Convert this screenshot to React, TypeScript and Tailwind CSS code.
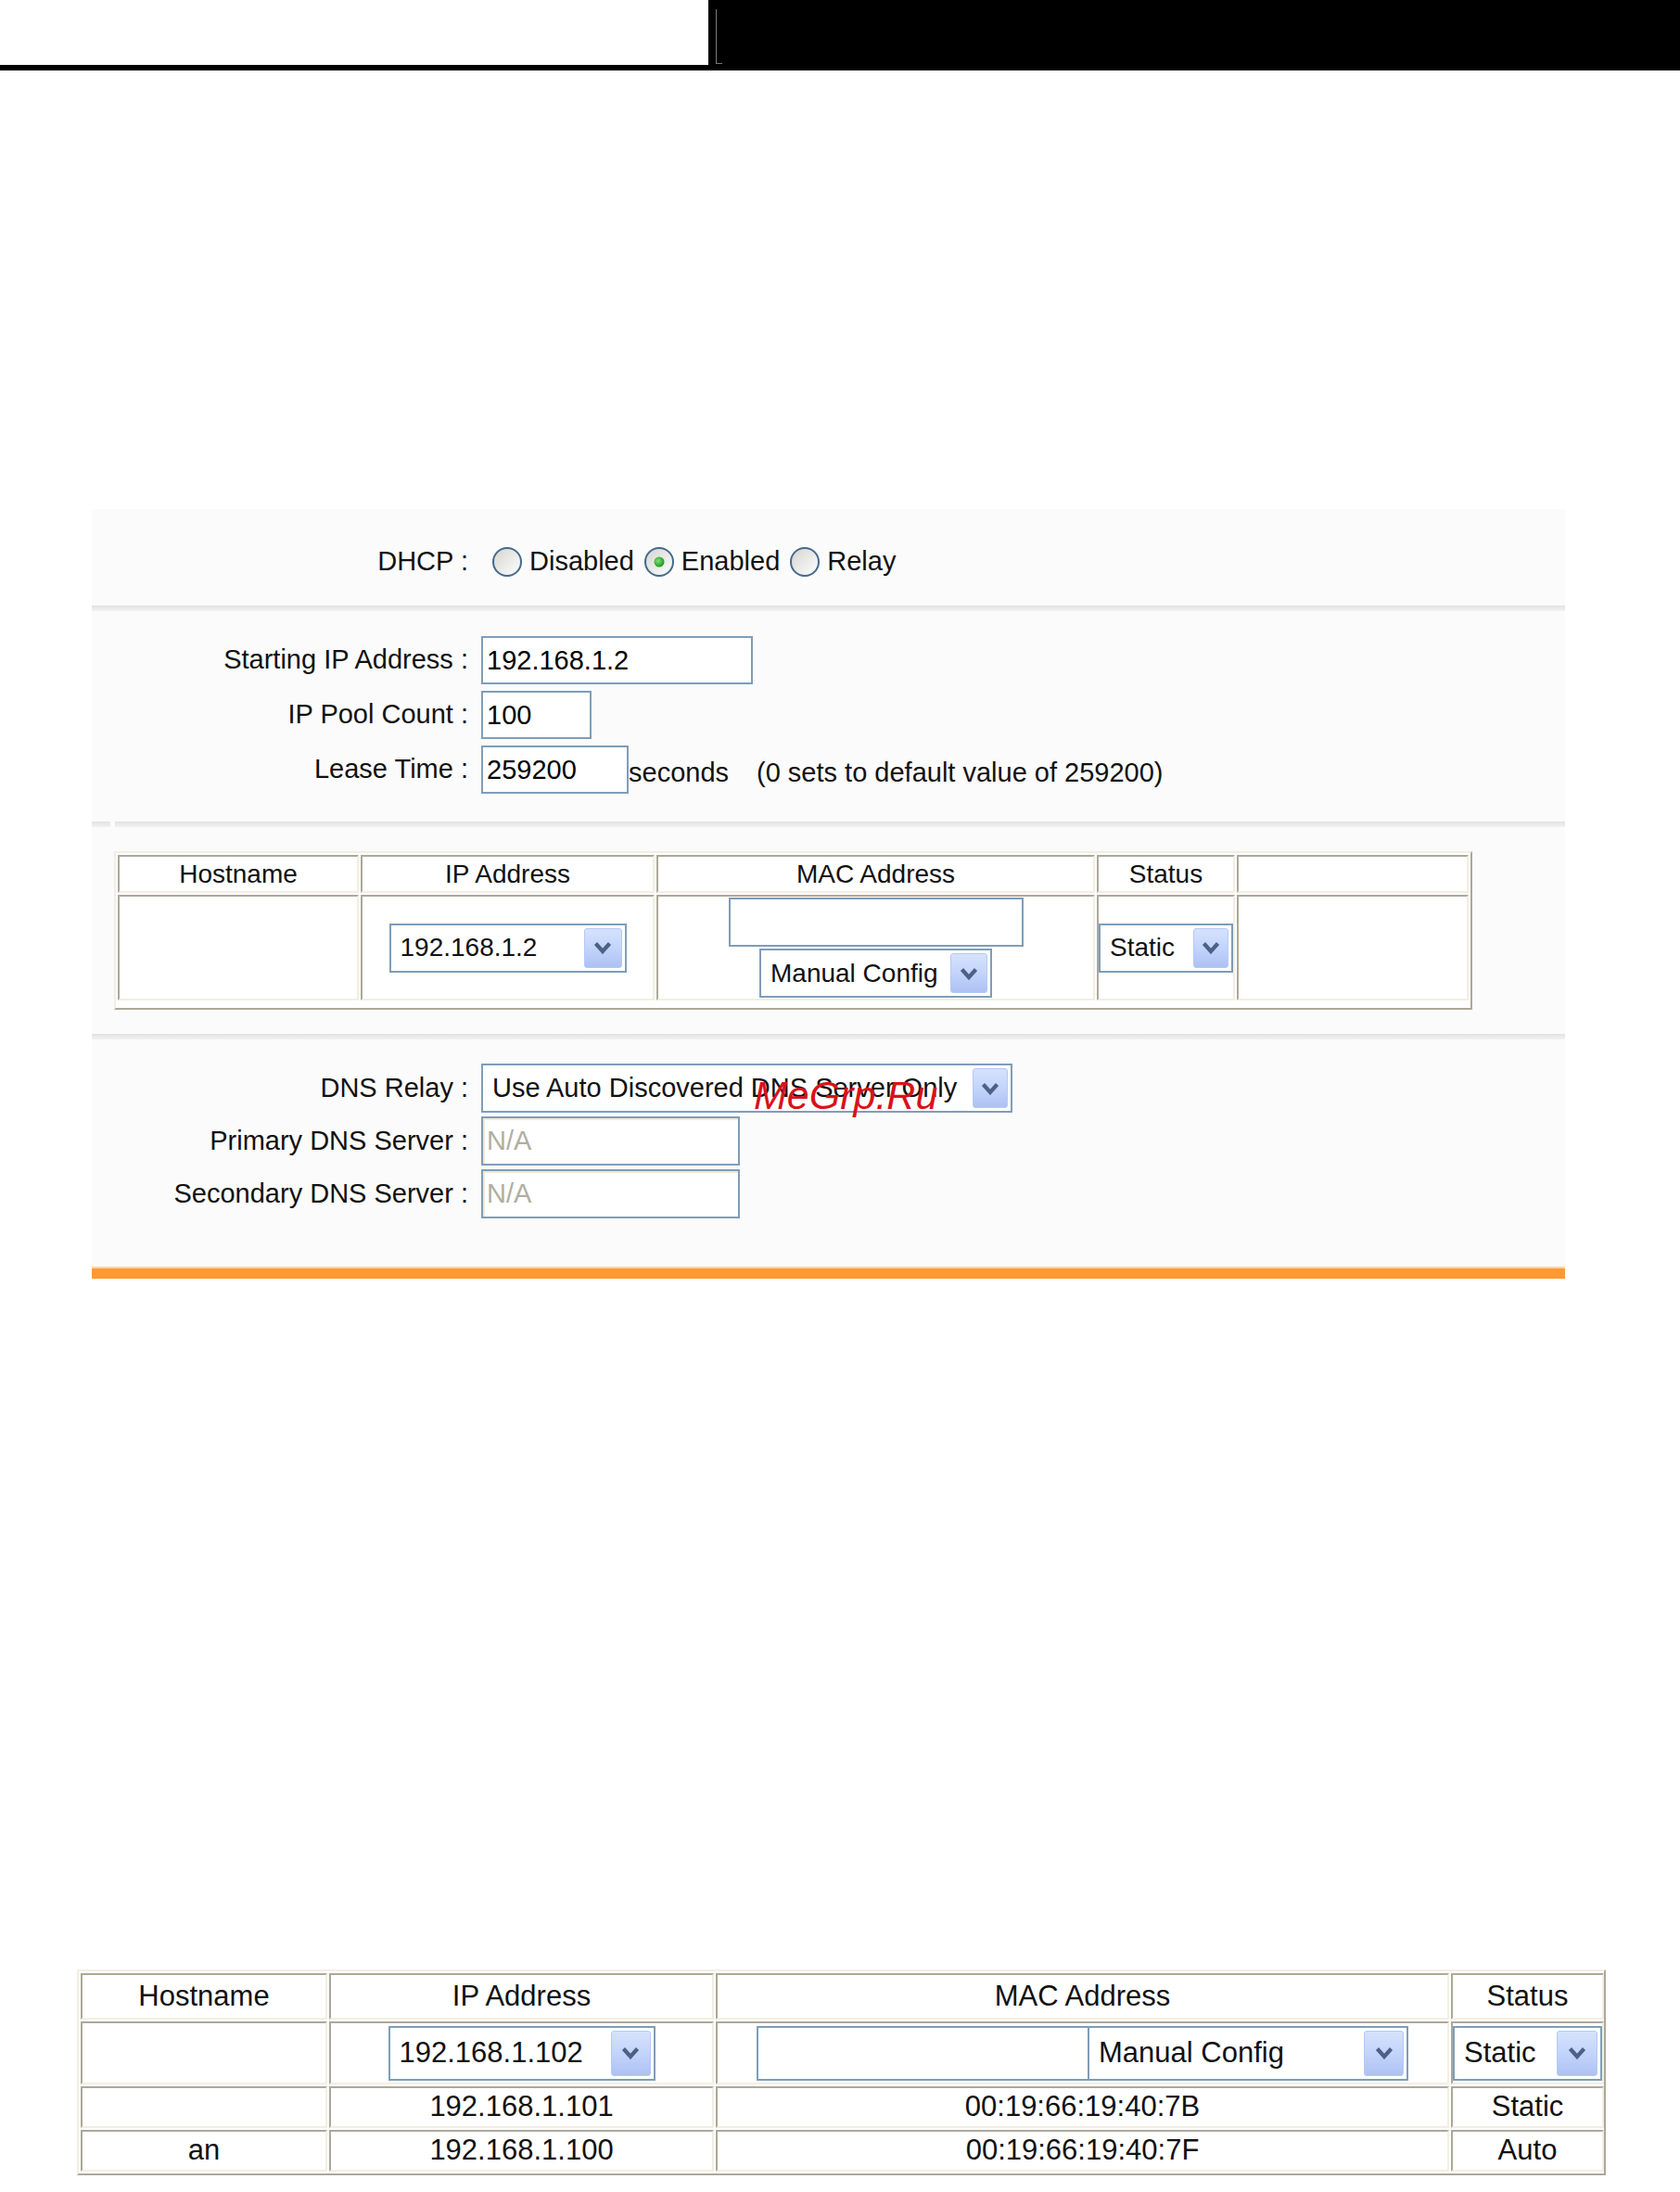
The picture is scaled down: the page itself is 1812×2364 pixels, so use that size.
import React from 'react';

// shared border colours of the XP-style controls
const cellBorder =
  'border-2 border-t-[#aca899] border-l-[#aca899] border-b-[#f1efe2] border-r-[#f1efe2] bg-white';
const tableBorder =
  'border-2 border-t-[#f1efe2] border-l-[#f1efe2] border-b-[#aca899] border-r-[#aca899] bg-white';

const DropButton: React.FC<{ className?: string }> = ({ className = '' }) => (
  <span
    className={`flex shrink-0 items-center justify-center rounded-[3px] border border-[#b5c9f6] bg-linear-to-b from-[#d6e2fd] via-[#c3d4fb] to-[#adc1f3] ${className}`}
  >
    <svg viewBox="0 0 20 14" className="h-[14px] w-[20px]">
      <path d="M2.5 2.5 L10 11 L17.5 2.5" fill="none" stroke="#4d6185" strokeWidth="4.2" />
    </svg>
  </span>
);

interface SelectBoxProps {
  value: string;
  className?: string;
  buttonClass?: string;
}

const SelectBox: React.FC<SelectBoxProps> = ({ value, className = '', buttonClass = 'w-[40px]' }) => (
  <div className={`flex items-stretch border-2 border-[#7f9db9] bg-white p-[3px] ${className}`}>
    <span className="flex flex-1 items-center overflow-hidden whitespace-nowrap pl-[7px] text-left">{value}</span>
    <DropButton className={buttonClass} />
  </div>
);

interface TextBoxProps {
  value?: string;
  className?: string;
  disabled?: boolean;
}

const TextBox: React.FC<TextBoxProps> = ({ value = '', className = '', disabled }) => (
  <input
    readOnly
    value={value}
    className={`border-2 border-[#7f9db9] bg-white px-[4px] outline-none ${
      disabled ? 'text-[#b0ae9f] shadow-[inset_2px_2px_0_#ece9d8]' : 'text-black'
    } ${className}`}
  />
);

const Radio: React.FC<{ checked?: boolean }> = ({ checked }) => (
  <svg viewBox="0 0 34 34" className="h-[34px] w-[34px] shrink-0">
    <defs>
      <linearGradient id="radioFill" x1="0" y1="0" x2="1" y2="1">
        <stop offset="0" stopColor="#d4d4ce" />
        <stop offset="1" stopColor="#ffffff" />
      </linearGradient>
      <radialGradient id="radioDot" cx="0.4" cy="0.4" r="0.6">
        <stop offset="0" stopColor="#7ee07e" />
        <stop offset="1" stopColor="#1f9a1f" />
      </radialGradient>
    </defs>
    <circle cx="17" cy="17" r="15" fill="url(#radioFill)" stroke="#44698f" strokeWidth="2" />
    {checked && <circle cx="17" cy="17" r="5.5" fill="url(#radioDot)" />}
  </svg>
);

const Divider: React.FC<{ split?: boolean }> = ({ split }) => (
  <div className="flex h-[6px]">
    {split && <div className="w-[20px] bg-linear-to-b from-[#e2e2e2] to-[#f2f2f2]" />}
    {split && <div className="w-[5px]" />}
    <div className="flex-1 bg-linear-to-b from-[#e2e2e2] to-[#f2f2f2]" />
  </div>
);

const Label: React.FC<{ children: React.ReactNode }> = ({ children }) => (
  <div className="w-[406px] shrink-0 text-right">{children}</div>
);

const leases = [
  { host: '', ip: '192.168.1.101', mac: '00:19:66:19:40:7B', status: 'Static' },
  { host: 'an', ip: '192.168.1.100', mac: '00:19:66:19:40:7F', status: 'Auto' },
];

export default function App() {
  return (
    <div className="relative min-h-[2364px] w-[1812px] bg-white font-['Liberation_Sans',Arial,sans-serif] text-[#111]">
      {/* page header band */}
      <div className="flex h-[70px]">
        <div className="w-[764px] bg-white" />
        <div className="flex flex-1 bg-black">
          <div className="ml-[8px] mt-[10px] h-[59px] w-[7px] border-b border-l border-[#7a7a7a]" />
        </div>
      </div>
      <div className="h-[6px] bg-black" />

      {/* DHCP settings panel */}
      <div className="ml-[99px] mt-[473px] w-[1589px] bg-[#fbfbfb] text-[29px]">
        <div className="flex h-[104px] items-center pt-[10px]">
          <Label>DHCP :</Label>
          <div className="ml-[25px] flex items-center">
            <Radio />
            <span className="ml-[7px]">Disabled</span>
            <span className="ml-[10px]" />
            <Radio checked />
            <span className="ml-[7px]">Enabled</span>
            <span className="ml-[10px]" />
            <Radio />
            <span className="ml-[7px]">Relay</span>
          </div>
        </div>

        <Divider />

        <div className="flex flex-col gap-[7px] pb-[30px] pt-[27px]">
          <div className="flex items-center">
            <Label>Starting IP Address :</Label>
            <TextBox value="192.168.1.2" className="ml-[14px] h-[52px] w-[293px]" />
          </div>
          <div className="flex items-center">
            <Label>IP Pool Count :</Label>
            <TextBox value="100" className="ml-[14px] h-[52px] w-[119px]" />
          </div>
          <div className="flex items-center">
            <Label>Lease Time :</Label>
            <TextBox value="259200" className="ml-[14px] h-[52px] w-[159px]" />
            <span className="pt-[8px]">seconds</span>
            <span className="ml-[30px] pt-[8px]">(0 sets to default value of 259200)</span>
          </div>
        </div>

        <Divider split />

        {/* reserved address entry */}
        <div className="pb-[26px] pt-[26px] text-[28px]">
          <div className={`ml-[24px] grid w-[1465px] grid-cols-[260px_317px_473px_149px_1fr] grid-rows-[41px_114px] gap-[2px] p-[2px] pb-[8px] ${tableBorder}`}>
            {['Hostname', 'IP Address', 'MAC Address', 'Status', ''].map((h, i) => (
              <div key={i} className={`flex items-center justify-center ${cellBorder}`}>
                {h}
              </div>
            ))}
            <div className={cellBorder} />
            <div className={`flex items-center justify-center ${cellBorder}`}>
              <SelectBox value="192.168.1.2" className="h-[53px] w-[256px]" buttonClass="w-[41px]" />
            </div>
            <div className={`flex flex-col items-center justify-center gap-[2px] ${cellBorder}`}>
              <TextBox className="h-[53px] w-[318px]" />
              <SelectBox value="Manual Config" className="h-[53px] w-[251px]" buttonClass="w-[40px]" />
            </div>
            <div className={`flex items-center justify-center ${cellBorder}`}>
              <SelectBox value="Static" className="h-[53px] w-[145px]" buttonClass="w-[38px]" />
            </div>
            <div className={cellBorder} />
          </div>
        </div>

        <Divider />

        <div className="flex flex-col gap-[4px] pb-[52px] pt-[26px]">
          <div className="flex items-center">
            <Label>DNS Relay :</Label>
            <SelectBox
              value="Use Auto Discovered DNS Server Only"
              className="ml-[14px] h-[53px] w-[573px]"
              buttonClass="w-[38px]"
            />
          </div>
          <div className="flex items-center">
            <Label>Primary DNS Server :</Label>
            <TextBox value="N/A" disabled className="ml-[14px] h-[53px] w-[279px]" />
          </div>
          <div className="flex items-center">
            <Label>Secondary DNS Server :</Label>
            <TextBox value="N/A" disabled className="ml-[14px] h-[53px] w-[279px]" />
          </div>
        </div>

        <div className="h-[2px] bg-[#ffd4a8]" />
        <div className="h-[11px] bg-[#ff9933]" />
      </div>

      {/* address reservation list */}
      <div className={`ml-[83px] mt-[745px] grid w-[1649px] grid-cols-[266px_415px_791px_1fr] grid-rows-[50px_68px_45px_45px] gap-[2px] p-[2px] text-[31px] ${tableBorder}`}>
        {['Hostname', 'IP Address', 'MAC Address', 'Status'].map((h) => (
          <div key={h} className={`flex items-center justify-center ${cellBorder}`}>
            {h}
          </div>
        ))}
        <div className={cellBorder} />
        <div className={`flex items-center justify-center ${cellBorder}`}>
          <SelectBox value="192.168.1.102" className="h-[59px] w-[288px]" buttonClass="w-[43px]" />
        </div>
        <div className={`flex items-center justify-center ${cellBorder}`}>
          <TextBox className="h-[59px] w-[359px]" />
          <SelectBox value="Manual Config" className="-ml-[2px] h-[59px] w-[346px]" buttonClass="w-[43px]" />
        </div>
        <div className={`flex items-center justify-center ${cellBorder}`}>
          <SelectBox value="Static" className="h-[59px] w-[161px]" buttonClass="w-[44px]" />
        </div>
        {leases.map((row) => (
          <React.Fragment key={row.ip}>
            <div className={`flex items-center justify-center ${cellBorder}`}>{row.host}</div>
            <div className={`flex items-center justify-center ${cellBorder}`}>{row.ip}</div>
            <div className={`flex items-center justify-center ${cellBorder}`}>{row.mac}</div>
            <div className={`flex items-center justify-center ${cellBorder}`}>{row.status}</div>
          </React.Fragment>
        ))}
      </div>

      {/* site watermark laid over the DNS relay box */}
      <span className="pointer-events-none absolute left-[813px] top-[1160px] text-[43px] italic leading-none text-[#d8121a]">
        MeGrp.Ru
      </span>
    </div>
  );
}
